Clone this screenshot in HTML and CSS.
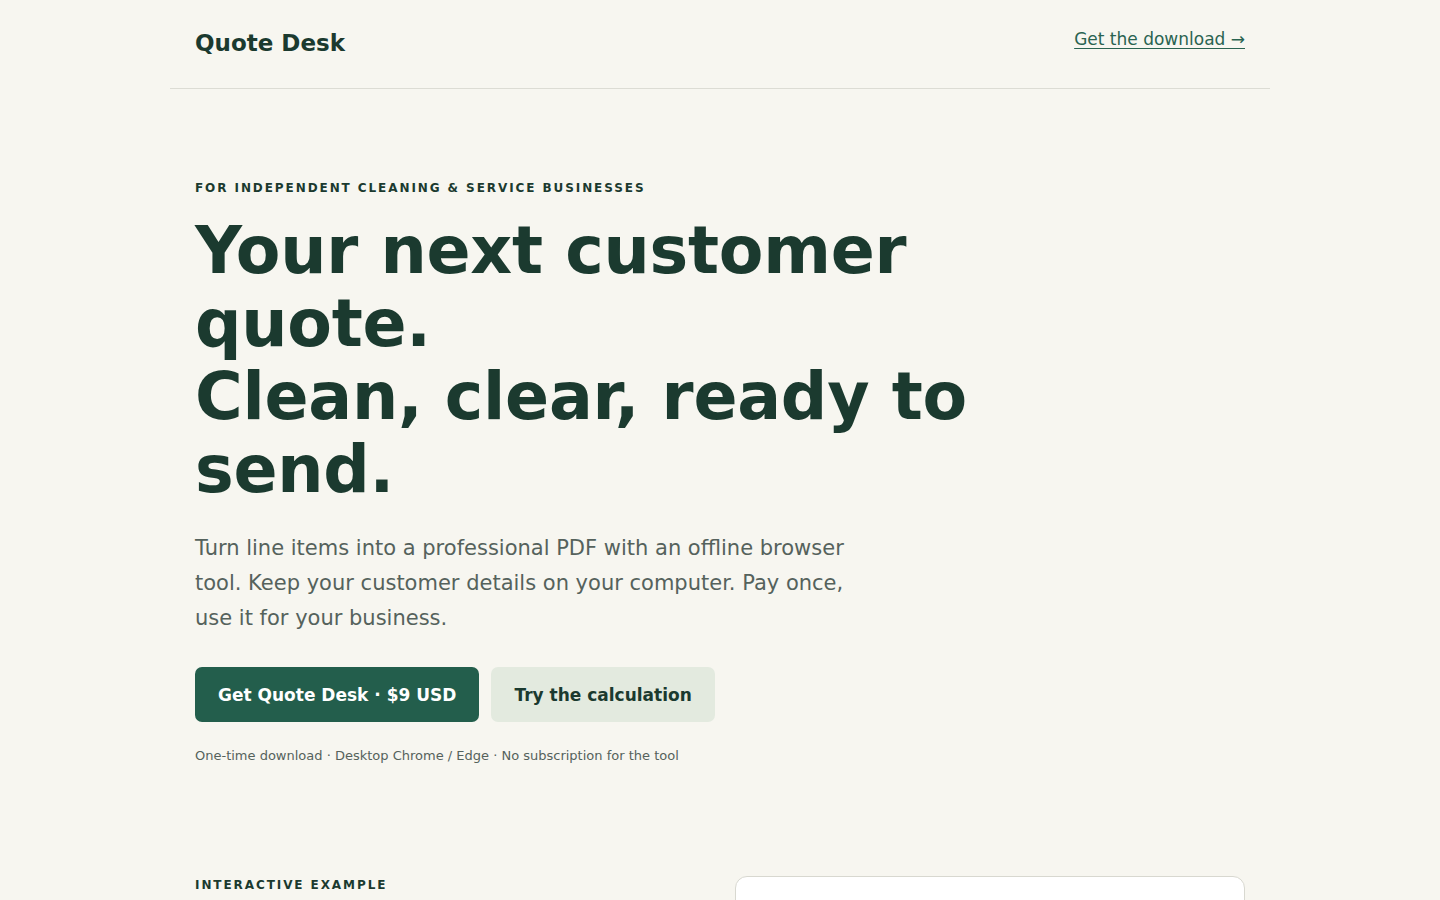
FILE: index.html
```
<!DOCTYPE html>
<html lang="en">
<head>
<meta charset="utf-8">
<title>Quote Desk</title>
<link rel="stylesheet" href="styles.css">
</head>
<body>
<div class="wrap">
  <header class="site-header">
    <div class="logo">Quote Desk</div>
    <a class="top-link" href="#download">Get the download →</a>
  </header>
  <main>
    <section class="hero">
      <p class="eyebrow">For independent cleaning &amp; service businesses</p>
      <h1 class="headline">Your next customer quote.<br>Clean, clear, ready to send.</h1>
      <p class="lede">Turn line items into a professional PDF with an offline browser tool. Keep your customer details on your computer. Pay once, use it for your business.</p>
      <div class="actions">
        <a class="btn btn-primary" href="#buy">Get Quote Desk · $9 USD</a>
        <a class="btn btn-secondary" href="#try">Try the calculation</a>
      </div>
      <p class="note">One-time download · Desktop Chrome / Edge · No subscription for the tool</p>
    </section>
    <section class="example" id="try">
      <div class="example-copy">
        <p class="eyebrow">Interactive example</p>
      </div>
      <div class="example-card"></div>
    </section>
  </main>
</div>
</body>
</html>
```

FILE: styles.css
```
* { box-sizing: border-box; }
html, body { margin: 0; padding: 0; }
body {
  background: #f7f6f0;
  color: #1b3a2f;
  font-family: "DejaVu Sans", "Noto Sans", sans-serif;
}
.wrap {
  width: 1100px;
  margin: 0 auto;
}
.site-header {
  height: 89px;
  display: flex;
  align-items: center;
  justify-content: space-between;
  padding: 0 25px;
  border-bottom: 1px solid #dcdcd4;
}
.logo {
  font-size: 23px;
  font-weight: 700;
  color: #1b3a2f;
  margin-top: -2px;
}
.top-link {
  font-size: 17px;
  color: #2a6351;
  text-decoration: underline;
  text-underline-offset: 3px;
  text-decoration-thickness: 1px;
  margin-top: -10px;
}
.hero {
  padding: 92px 25px 0;
}
.eyebrow {
  margin: 0;
  font-size: 12px;
  font-weight: 700;
  letter-spacing: 0.16em;
  text-transform: uppercase;
  color: #1b3a2f;
}
.headline {
  margin: 19px 0 0;
  font-size: 65px;
  line-height: 73px;
  font-weight: 700;
  letter-spacing: -0.25px;
  color: #1b3a2f;
  max-width: 860px;
}
.lede {
  margin: 25px 0 0;
  font-size: 21px;
  line-height: 35px;
  color: #55625c;
  max-width: 660px;
}
.actions {
  display: flex;
  gap: 12px;
  margin-top: 31px;
}
.btn {
  display: inline-flex;
  align-items: center;
  height: 55px;
  padding: 0 23px;
  border-radius: 7px;
  font-size: 17px;
  font-weight: 700;
  text-decoration: none;
}
.btn-primary {
  background: #235e4c;
  color: #ffffff;
}
.btn-secondary {
  background: #e3eadf;
  color: #1b3a2f;
}
.note {
  margin: 26px 0 0;
  font-size: 13px;
  color: #55625c;
}
.example {
  display: grid;
  grid-template-columns: 1fr 1fr;
  gap: 30px;
  padding: 113px 25px 0;
}
.example-copy {
  padding-top: 2px;
}
.example-card {
  background: #ffffff;
  border: 1px solid #d8d8d0;
  border-radius: 12px;
  height: 300px;
}
```
